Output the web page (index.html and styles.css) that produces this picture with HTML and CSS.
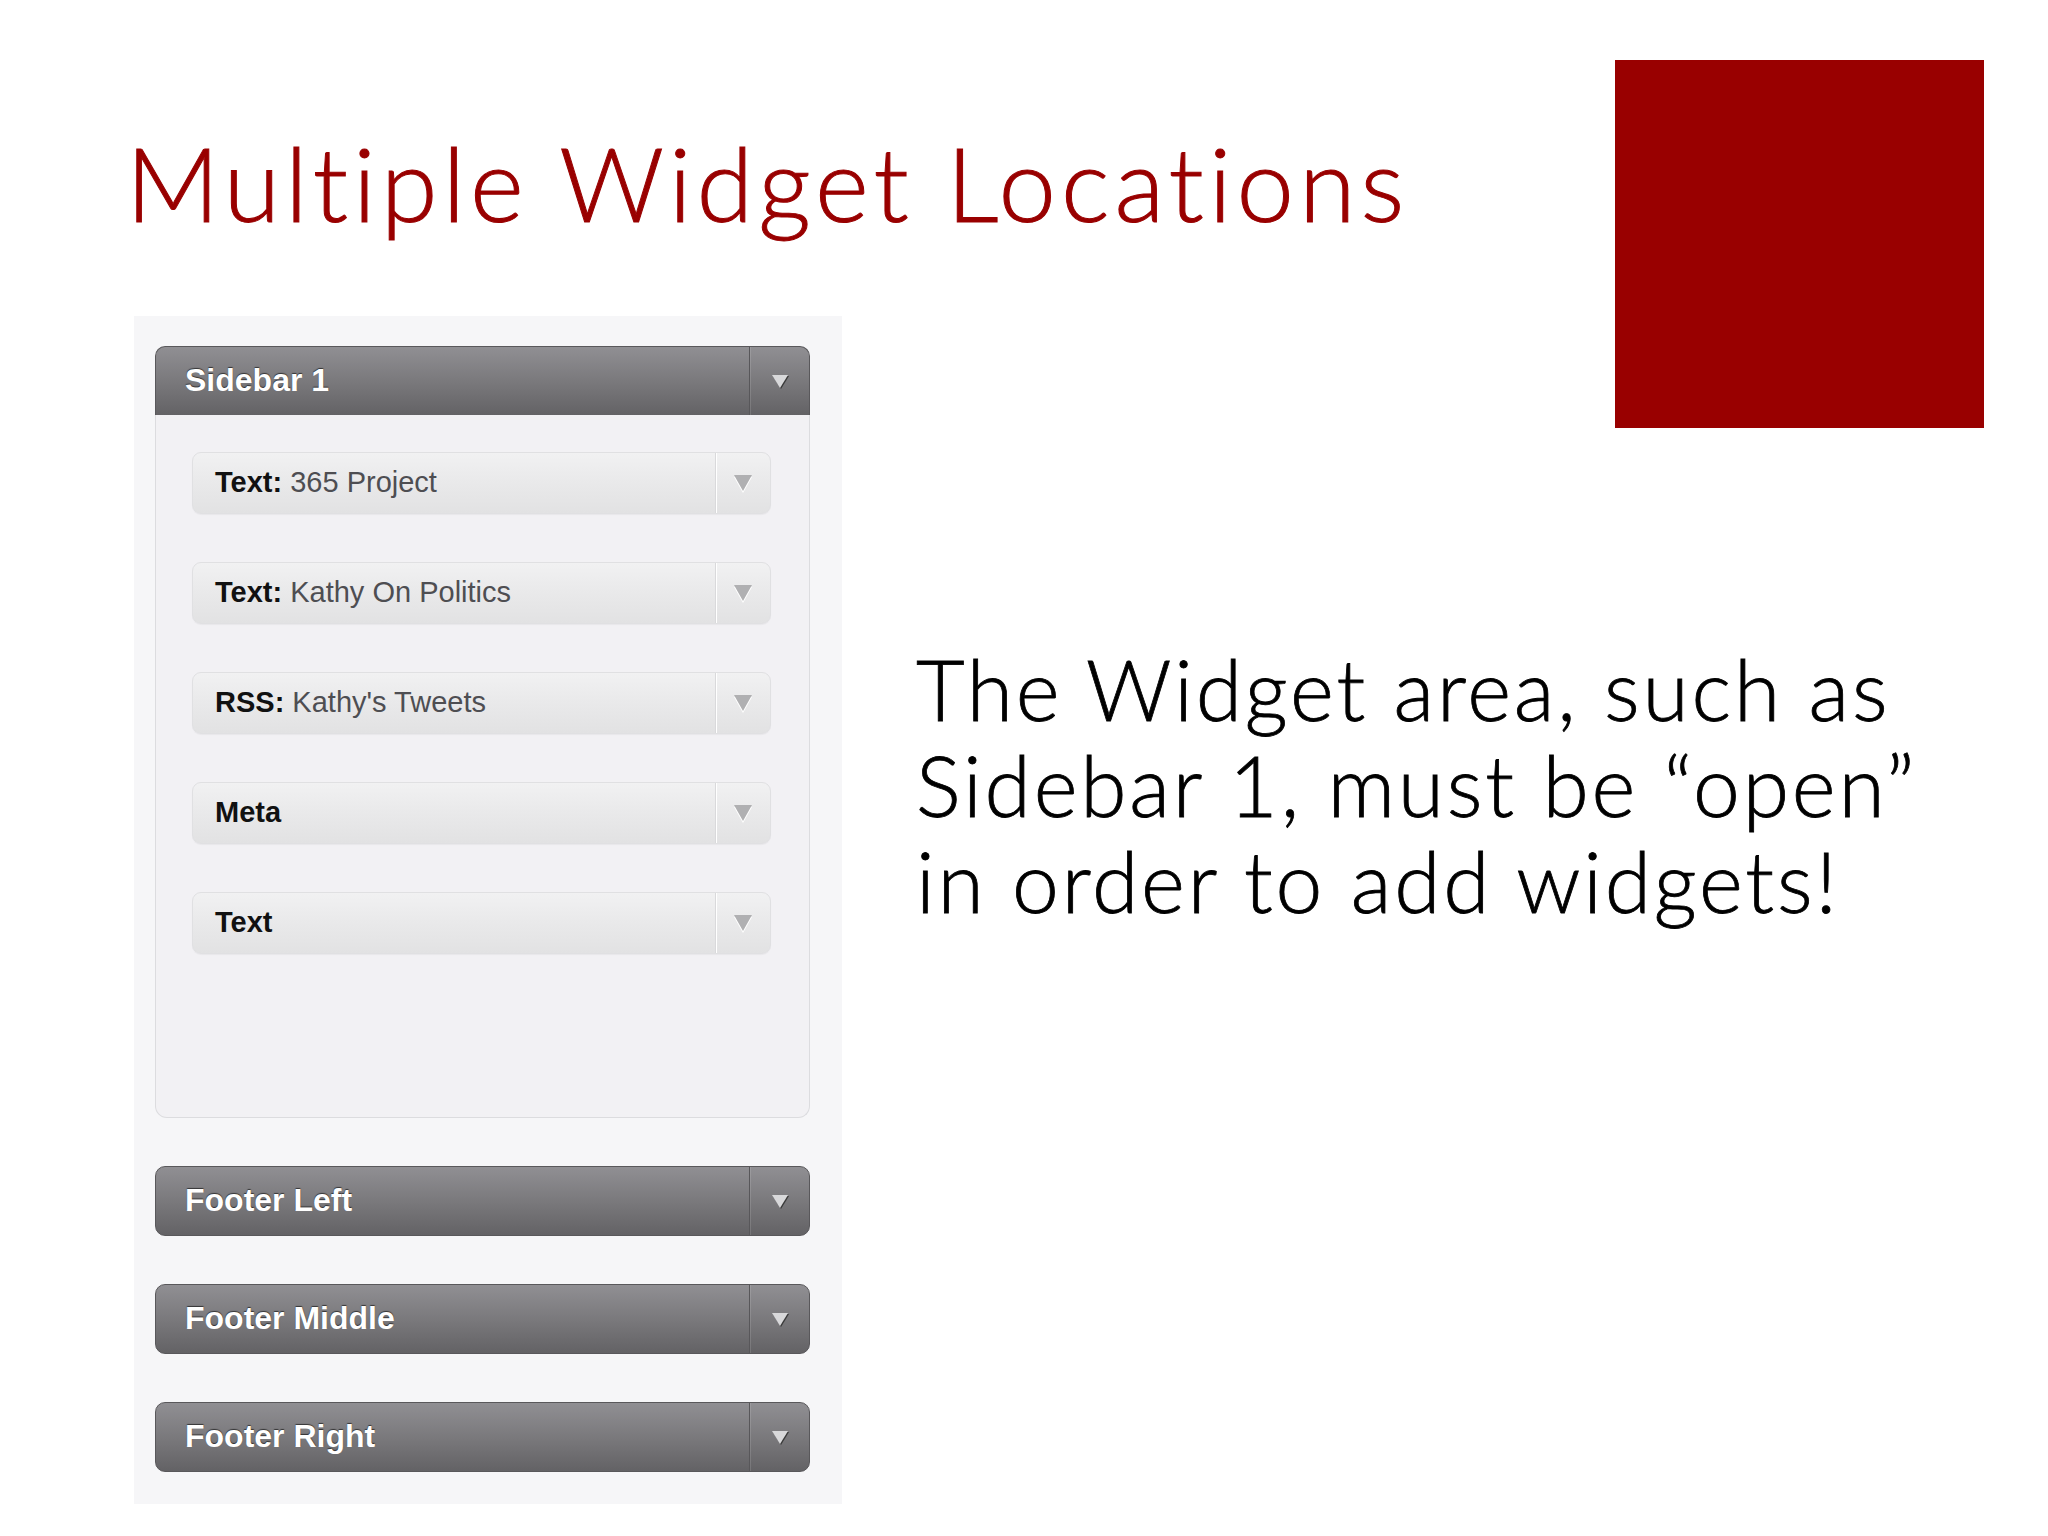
FILE: index.html
```html
<!DOCTYPE html>
<html>
<head>
<meta charset="utf-8">
<title>Multiple Widget Locations</title>
<link rel="stylesheet" href="styles.css">
</head>
<body>
<div class="slide">
  <div class="accent"></div>
  <h1 class="title">Multiple Widget Locations</h1>
  <div class="content">
    <div class="panel">
      <div class="area open">
        <div class="area-head">
          <span class="area-name">Sidebar 1</span>
          <span class="area-toggle"><svg width="22" height="18" viewBox="0 0 22 18"><polygon points="3,3 19,3 11,16" fill="#3a3a3a" transform="translate(1,1)"/><polygon points="3,3 19,3 11,16" fill="#d8d8da"/></svg></span>
        </div>
        <div class="area-body">
          <div class="widget"><span class="w-label"><span><b>Text:</b> <span class="w-val">365 Project</span></span></span><span class="w-toggle"><svg width="22" height="20" viewBox="0 0 22 20"><polygon points="2,3 20,3 11,19" fill="#ffffff" transform="translate(0,1)"/><polygon points="2,2 20,2 11,18" fill="#b0b0b2"/></svg></span></div>
          <div class="widget"><span class="w-label"><span><b>Text:</b> <span class="w-val">Kathy On Politics</span></span></span><span class="w-toggle"><svg width="22" height="20" viewBox="0 0 22 20"><polygon points="2,3 20,3 11,19" fill="#ffffff" transform="translate(0,1)"/><polygon points="2,2 20,2 11,18" fill="#b0b0b2"/></svg></span></div>
          <div class="widget"><span class="w-label"><span><b>RSS:</b> <span class="w-val">Kathy's Tweets</span></span></span><span class="w-toggle"><svg width="22" height="20" viewBox="0 0 22 20"><polygon points="2,3 20,3 11,19" fill="#ffffff" transform="translate(0,1)"/><polygon points="2,2 20,2 11,18" fill="#b0b0b2"/></svg></span></div>
          <div class="widget"><span class="w-label"><span><b>Meta</b></span></span><span class="w-toggle"><svg width="22" height="20" viewBox="0 0 22 20"><polygon points="2,3 20,3 11,19" fill="#ffffff" transform="translate(0,1)"/><polygon points="2,2 20,2 11,18" fill="#b0b0b2"/></svg></span></div>
          <div class="widget"><span class="w-label"><span><b>Text</b></span></span><span class="w-toggle"><svg width="22" height="20" viewBox="0 0 22 20"><polygon points="2,3 20,3 11,19" fill="#ffffff" transform="translate(0,1)"/><polygon points="2,2 20,2 11,18" fill="#b0b0b2"/></svg></span></div>
        </div>
      </div>
      <div class="area">
        <div class="area-head closed">
          <span class="area-name">Footer Left</span>
          <span class="area-toggle"><svg width="22" height="18" viewBox="0 0 22 18"><polygon points="3,3 19,3 11,16" fill="#3a3a3a" transform="translate(1,1)"/><polygon points="3,3 19,3 11,16" fill="#d8d8da"/></svg></span>
        </div>
      </div>
      <div class="area">
        <div class="area-head closed">
          <span class="area-name">Footer Middle</span>
          <span class="area-toggle"><svg width="22" height="18" viewBox="0 0 22 18"><polygon points="3,3 19,3 11,16" fill="#3a3a3a" transform="translate(1,1)"/><polygon points="3,3 19,3 11,16" fill="#d8d8da"/></svg></span>
        </div>
      </div>
      <div class="area">
        <div class="area-head closed">
          <span class="area-name">Footer Right</span>
          <span class="area-toggle"><svg width="22" height="18" viewBox="0 0 22 18"><polygon points="3,3 19,3 11,16" fill="#3a3a3a" transform="translate(1,1)"/><polygon points="3,3 19,3 11,16" fill="#d8d8da"/></svg></span>
        </div>
      </div>
    </div>
    <p class="note">The Widget area, such as<br>Sidebar 1, must be “open”<br>in order to add widgets!</p>
  </div>
</div>
</body>
</html>
```

FILE: styles.css
```css
html, body {
  margin: 0;
  padding: 0;
  background: #ffffff;
}

.slide {
  position: relative;
  width: 2048px;
  height: 1536px;
  overflow: hidden;
  background: #ffffff;
  font-family: Lato, "Liberation Sans", sans-serif;
}

.accent {
  position: absolute;
  left: 1615px;
  top: 60px;
  width: 369px;
  height: 368px;
  background: #990000;
}

.title {
  margin: 0;
  padding: 121px 0 0 126px;
  font-family: Lato, "Liberation Sans", sans-serif;
  font-weight: 300;
  font-size: 103px;
  line-height: 1.2;
  letter-spacing: 4.9px;
  font-variant-ligatures: none;
  -webkit-text-stroke: 1px #990000;
  color: #990000;
  white-space: nowrap;
}

.content {
  display: flex;
  align-items: flex-start;
  margin-top: 71px;
  padding-left: 134px;
}

.panel {
  width: 708px;
  height: 1188px;
  box-sizing: border-box;
  padding: 30px 32px 0 21px;
  background: #f6f6f8;
  display: flex;
  flex-direction: column;
  gap: 48px;
  font-family: "Liberation Sans", Arial, sans-serif;
}

.area-head {
  height: 69px;
  box-sizing: border-box;
  display: flex;
  align-items: stretch;
  background: linear-gradient(#908f93, #78777a 55%, #636265);
  border: 1px solid #59585b;
  border-bottom: none;
  border-radius: 10px 10px 0 0;
}

.area-head.closed {
  height: 70px;
  border-bottom: 1px solid #59585b;
  border-radius: 10px;
}

.area-name {
  flex: 1;
  display: flex;
  align-items: center;
  padding-left: 29px;
  font-size: 32px;
  font-weight: 700;
  color: #ffffff;
  text-shadow: 0 -1px 1px rgba(0, 0, 0, 0.6);
}

.area-toggle {
  width: 59px;
  display: flex;
  align-items: center;
  justify-content: center;
  border-left: 1px solid #58575a;
  box-shadow: inset 1px 0 0 rgba(255, 255, 255, 0.12);
}

.area-body {
  height: 703px;
  box-sizing: border-box;
  padding: 37px 38px 0 36px;
  background: #f2f1f4;
  border: 1px solid #dcdcdf;
  border-top: none;
  border-radius: 0 0 12px 12px;
  display: flex;
  flex-direction: column;
  gap: 48px;
}

.widget {
  height: 62px;
  box-sizing: border-box;
  display: flex;
  align-items: stretch;
  background: linear-gradient(#f1f1f2, #e9e9ea 50%, #e2e2e3);
  border: 1px solid #e0e0e2;
  border-radius: 9px;
  box-shadow: 0 1px 1px rgba(0, 0, 0, 0.04);
}

.w-label {
  flex: 1;
  display: flex;
  align-items: center;
  padding-left: 22px;
  font-size: 29px;
  color: #111111;
  white-space: pre;
}

.w-label b {
  font-weight: 700;
}

.w-val {
  color: #4e4e52;
  font-weight: 400;
}

.w-toggle {
  width: 54px;
  display: flex;
  align-items: center;
  justify-content: center;
  border-left: 1px solid #d9d9db;
  box-shadow: inset 1px 0 0 #ffffff;
}

.note {
  margin: 325px 0 0 74px;
  font-family: Lato, "Liberation Sans", sans-serif;
  font-weight: 300;
  font-size: 84px;
  line-height: 96px;
  letter-spacing: 2.8px;
  -webkit-text-stroke: 0.8px #000000;
  color: #000000;
  white-space: nowrap;
}
```
